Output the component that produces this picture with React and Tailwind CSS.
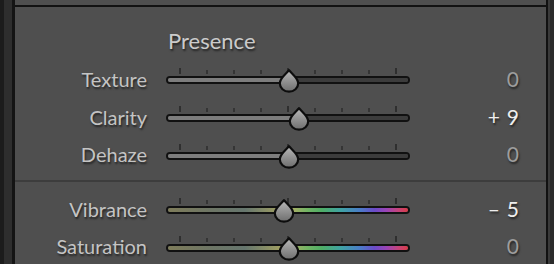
import React from "react";

const FONT = { fontFamily: "Lato, 'Open Sans', sans-serif" };

const TICKS = [true, false, false, false, true, false, false, false, true];

function Thumb() {
  return (
    <svg width="24" height="24" viewBox="0 0 24 24">
      <defs>
        <linearGradient id="tg" x1="0" y1="0" x2="0" y2="1">
          <stop offset="0%" stopColor="#b8b8b8" />
          <stop offset="100%" stopColor="#6e6e6e" />
        </linearGradient>
      </defs>
      <path
        d="M12 1.2 C13.8 4 21.2 9 21.2 14.3 A9.2 8.4 0 0 1 2.8 14.3 C2.8 9 10.2 4 12 1.2 Z"
        fill="url(#tg)"
        stroke="#0d0d0d"
        strokeWidth="2.2"
        strokeLinejoin="round"
      />
    </svg>
  );
}

function Slider({ value, color }) {
  const center = 123;
  const pos = center + (value / 100) * 109;
  return (
    <div className="relative h-full w-[244px] shrink-0">
      <div className="absolute left-[13px] right-[13px] top-[calc(50%-12px)] flex h-[6px] items-end justify-between">
        {TICKS.map((tall, i) => (
          <div
            key={i}
            className={tall ? "h-[6px] w-[2px] bg-[#2f2f2f]" : "h-[4px] w-[2px] bg-[#353535]"}
          />
        ))}
      </div>
      <div className="absolute left-0 right-0 top-1/2 h-[8px] -translate-y-1/2 overflow-hidden rounded-full border-[2px] border-[#111111]">
        {color ? (
          <div className="h-full w-full bg-[linear-gradient(to_right,#7e7c5a_0%,#6d7565_18%,#66766e_32%,#9c9c62_46%,#a6ae66_52%,#72b464_58%,#4fae66_64%,#3fa3a4_72%,#4a7cc8_80%,#6a4cc8_86%,#9a44b6_91%,#c6447a_96%,#d83c48_100%)]" />
        ) : (
          <div className="flex h-full w-full">
            <div className="h-full bg-[#7d7d7d]" style={{ width: pos }} />
            <div className="h-full flex-1 bg-[#3c3c3c]" />
          </div>
        )}
      </div>
      <div
        className="absolute top-1/2 h-[24px] w-[24px] -translate-x-1/2 -translate-y-[11px]"
        style={{ left: pos }}
      >
        <Thumb />
      </div>
    </div>
  );
}

function Row({ label, value, sign, digit, color, h }) {
  const zero = value === 0;
  return (
    <div className={`flex items-center ${h}`}>
      <div className="w-[132px] -mt-[3px] text-right text-[20px] leading-[24px] text-[#c4c4c4] [text-shadow:1px_2px_2px_rgba(0,0,0,0.55)]">
        {label}
      </div>
      <div className="ml-[19px] h-full">
        <Slider value={value} color={color} />
      </div>
      <div
        className={`flex-1 -mt-[3px] pr-[27px] text-right text-[21px] leading-[24px] [text-shadow:1px_2px_2px_rgba(0,0,0,0.55)] ${
          zero ? "text-[#9d9d9d]" : "text-[#eeeeee]"
        }`}
      >
        {sign ? <span className="mr-[7px]">{sign}</span> : null}
        {digit}
      </div>
    </div>
  );
}

export default function App() {
  return (
    <div className="flex h-[264px] w-[554px] overflow-hidden bg-[#4f4f4f]" style={FONT}>
      <div className="flex h-full w-[15px] shrink-0">
        <div className="h-full w-[4px] bg-[#1c1c1c]" />
        <div className="h-full w-[8px] bg-[#2e2e2e]" />
        <div className="h-full w-[3px] bg-[#141414]" />
      </div>
      <div className="flex h-full flex-1 flex-col">
        <div className="h-[5px] shrink-0 bg-[#4f4f4f]" />
        <div className="h-[2px] shrink-0 bg-[#121212]" />
        <div className="flex flex-1 flex-col bg-[#4f4f4f]">
          <div className="h-[54px] shrink-0 pt-[21px] pl-[153px] text-[22px] leading-[26px] text-[#cbcbcb] [text-shadow:1px_2px_2px_rgba(0,0,0,0.55)]">
            Presence
          </div>
          <Row label="Texture" value={0} digit="0" h="h-[38px]" />
          <Row label="Clarity" value={9} sign="+" digit="9" h="h-[38px]" />
          <Row label="Dehaze" value={0} digit="0" h="h-[37px]" />
          <div className="h-[6px] shrink-0" />
          <div className="h-[2px] shrink-0 bg-[#3d3d3d]" />
          <div className="h-[9px] shrink-0" />
          <Row label="Vibrance" value={-5} sign="–" digit="5" color h="h-[38px]" />
          <Row label="Saturation" value={0} digit="0" color h="h-[37px]" />
        </div>
      </div>
      <div className="h-full w-[2px] shrink-0 bg-[#111111]" />
      <div className="h-full w-[2px] shrink-0 bg-[#3a3a3a]" />
      <div className="h-full w-[4px] shrink-0 bg-[#2b2b2b]" />
    </div>
  );
}
